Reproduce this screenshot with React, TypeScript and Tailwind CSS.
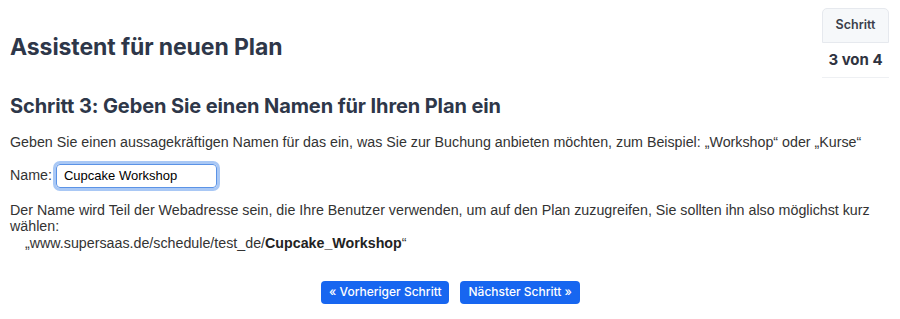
export default function App() {
  return (
    <main className="relative min-h-screen bg-white px-[10px] text-[#333] font-['Liberation_Sans',Arial,sans-serif]">
      {/* step indicator */}
      <div className="absolute right-[11px] top-[8px] w-[67px] text-center font-['Inter',sans-serif]">
        <div className="rounded-t-[5px] border border-[#e6e9ee] bg-[#f6f8fa] py-[7px] text-[12.5px] font-semibold text-[#3a3f4a]">
          Schritt
        </div>
        <div className="border-b border-[#eef0f3] py-[6px] text-[15px] font-bold text-[#2f3340]">
          3 von 4
        </div>
      </div>

      <h1 className="pt-[30px] font-['Inter',sans-serif] text-[23px] font-bold tracking-[-0.1px] text-[#2e3749]">
        Assistent für neuen Plan
      </h1>

      <h2 className="mt-[26px] font-['Inter',sans-serif] text-[20px] font-bold tracking-[-0.1px] text-[#2e3749]">
        Schritt 3: Geben Sie einen Namen für Ihren Plan ein
      </h2>

      <p className="mt-[12px] text-[14.25px] leading-[18px]">
        Geben Sie einen aussagekräftigen Namen für das ein, was Sie zur Buchung anbieten möchten, zum Beispiel: „Workshop“ oder „Kurse“
      </p>

      <div className="mt-[13px] flex items-center gap-[4px] text-[14.25px]">
        <label htmlFor="name">Name:</label>
        <input
          id="name"
          defaultValue="Cupcake Workshop"
          className="h-[24px] w-[161px] rounded-[4px] border border-[#5b93e6] px-[7px] text-[13px] text-black outline-none ring-[3px] ring-[#a9c8f5] font-['Liberation_Sans',Arial,sans-serif]"
        />
      </div>

      <p className="mt-[14px] text-[14.25px] leading-[16px]">
        Der Name wird Teil der Webadresse sein, die Ihre Benutzer verwenden, um auf den Plan zuzugreifen, Sie sollten ihn also möglichst kurz wählen:
        <br />
        <span className="mt-[1px] inline-block pl-[15px]">
          „www.supersaas.de/schedule/test_de/<b className="text-[#222]">Cupcake_Workshop</b>“
        </span>
      </p>

      <div className="mt-[30px] flex justify-center gap-[11px] pl-[1px]">
        <button className="h-[23px] rounded-[4px] bg-[#1766f0] px-[8px] text-[12px] font-medium text-white font-['Inter',sans-serif]">
          « Vorheriger Schritt
        </button>
        <button className="h-[23px] rounded-[4px] bg-[#1766f0] px-[8px] text-[12px] font-medium text-white font-['Inter',sans-serif]">
          Nächster Schritt »
        </button>
      </div>
    </main>
  );
}
